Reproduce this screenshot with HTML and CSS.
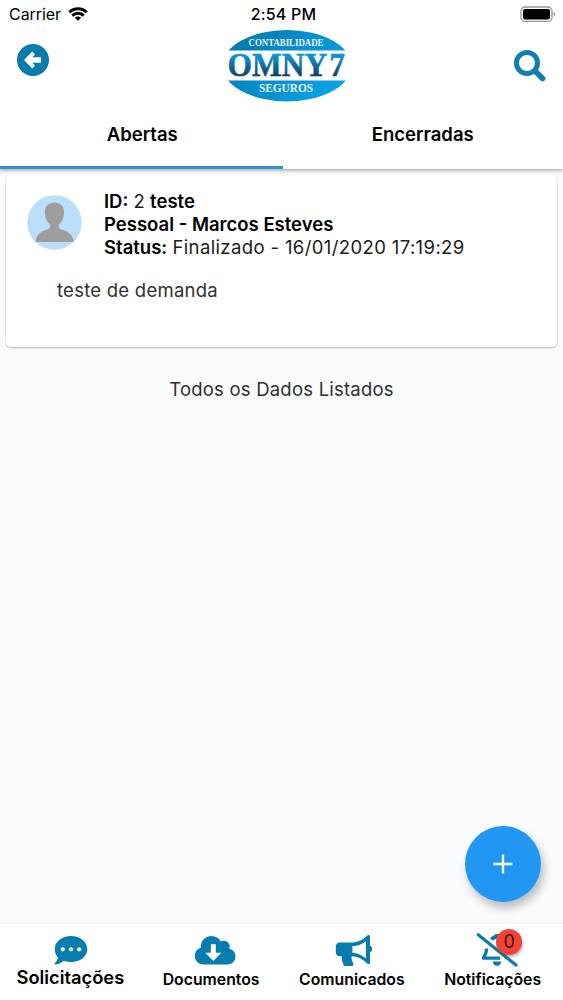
FILE: index.html
```html
<!DOCTYPE html>
<html lang="pt-BR">
<head>
<meta charset="utf-8">
<title>Solicitações</title>
<link rel="stylesheet" href="styles.css">
</head>
<body>
<div class="app">
  <header class="top">
    <div class="status-bar">
      <div class="carrier"><span>Carrier</span>
        <svg class="wifi" width="20" height="14" viewBox="0 0 20 14" fill="none" stroke="#000" stroke-width="2.9"><path d="M1.300 5.300a12.400 12.400 0 0 1 17.400 0"/><path d="M4.300 8.600a8.100 8.100 0 0 1 11.400 0"/><path d="M10 13.800 6.900 10.800a4.400 4.400 0 0 1 6.200 0z" fill="#000" stroke="none"/></svg>
      </div>
      <span class="clock">2:54 PM</span>
      <svg class="battery" width="36" height="17" viewBox="0 0 36 17"><rect x="1" y="1" width="31" height="14.4" rx="4" fill="#fff" stroke="#999" stroke-width="1.3"/><rect x="3" y="3" width="27" height="10.4" rx="2" fill="#000"/><path d="M33.6 5.800c2.200.8 2.200 4 0 4.800z" fill="#999"/></svg>
    </div>
    <div class="toolbar">
      <svg class="back" width="32" height="32" viewBox="0 0 32 32"><circle cx="16" cy="16" r="16" fill="#057cae"/><path d="M7 16 15.200 7.600 18 10.400 15.300 13.200H24v5.600h-8.700l2.700 2.800-2.800 2.800z" fill="#fff"/></svg>
      <svg class="logo" width="122" height="74" viewBox="0 0 122 74">
        <defs>
          <linearGradient id="oval" x1="0" x2="1" y1="0" y2=".5"><stop offset="0" stop-color="#076fa4"/><stop offset=".5" stop-color="#078bc9"/><stop offset="1" stop-color="#0aa1e5"/></linearGradient>
          <linearGradient id="word" x1="0" x2="0" y1="0" y2="1"><stop offset=".25" stop-color="#0d93d0"/><stop offset=".8" stop-color="#123f63"/></linearGradient>
          <clipPath id="caps"><path d="M0 0h122v21.500H0zM0 51.500h122V74H0z"/></clipPath>
        </defs>
        <ellipse cx="61" cy="36.800" rx="64.500" ry="35.700" fill="url(#oval)" clip-path="url(#caps)"/>
        <text class="logo-small" x="60" y="17" font-size="10" textLength="75" lengthAdjust="spacingAndGlyphs">CONTABILIDADE</text>
        <text class="logo-word" x="1.500" y="47.300" font-size="33" textLength="117.500" lengthAdjust="spacingAndGlyphs" fill="url(#word)" stroke="url(#word)" stroke-width=".5">OMNY<tspan dx="2">7</tspan></text>
        <text class="logo-small" x="60" y="63" font-size="11.500" textLength="54" lengthAdjust="spacingAndGlyphs">SEGUROS</text>
      </svg>
      <svg class="search" width="34" height="34" viewBox="0 0 34 34" fill="none" stroke="#107fad"><circle cx="14" cy="14" r="10.500" stroke-width="5"/><path d="m22 22 7.600 7.600" stroke-width="5.600" stroke-linecap="round"/></svg>
    </div>
    <nav class="tabs"><a class="tab active">Abertas</a><a class="tab">Encerradas</a></nav>
  </header>
  <main class="content">
    <article class="card">
      <div class="card-head">
        <svg class="avatar" width="55" height="55" viewBox="0 0 55 55"><circle cx="27.500" cy="27.500" r="27.200" fill="#bbdefb"/><path d="M8.500 47c.7-7 4.500-10 11-12.200 3-1 3.900-2 3.700-4.800-3-3-5.400-7.500-5.400-13C17.800 11 22 7.500 27.500 7.500S37 11 37 17c0 5.500-2.200 10-5.200 13-.1 2.800.7 3.800 3.700 4.800C42 37 46 40 46.600 47z" fill="#9e9e9e"/></svg>
        <div class="details">
          <div class="line"><b>ID:</b> 2 <b>teste</b></div>
          <div class="line"><b>Pessoal - Marcos Esteves</b></div>
          <div class="line"><b>Status:</b> <span class="status">Finalizado - 16/01/2020 17:19:29</span></div>
        </div>
      </div>
      <p class="message">teste de demanda</p>
    </article>
    <p class="end">Todos os Dados Listados</p>
    <button class="fab" aria-label="Adicionar"><svg width="20" height="20" viewBox="0 0 20 20"><path d="M10 .5v19M.5 10h19" stroke="#fff" stroke-width="2.400"/></svg></button>
  </main>
  <nav class="bottom">
    <a class="item current">
      <svg width="34" height="30" viewBox="0 0 34 30"><path d="M17 1c9 0 16.300 5.800 16.300 13.200S26 27 17 27c-2.600 0-5-.4-7.200-1.200C7 28 4 29.600.8 29.600c-.5 0-.6-.6-.3-.9 1.500-1.700 3-3.700 3.500-6.200C2 20.200.7 17.400.7 14.200.7 6.800 8 1 17 1z" fill="#067dae"/><g fill="#fff"><circle cx="8.800" cy="14.300" r="2.100"/><circle cx="17" cy="14.300" r="2.100"/><circle cx="25.200" cy="14.300" r="2.100"/></g></svg>
      <span>Solicitações</span>
    </a>
    <a class="item docs">
      <svg width="42" height="30" viewBox="0 0 42 30"><path d="M9.500 29.400C4.500 29.400.8 25.700.8 20.900c0-3.900 2.400-7 6-8.100C6.500 6 11.300 1 17.500 1c4.200 0 7.600 2.100 9.400 5.400 4.200-2.200 9 .7 8.800 5.400 0 .8-.1 1.300-.3 1.900 3.500.8 6.100 3.900 6.100 7.700 0 4.500-3.500 8-8 8z" fill="#067dae"/><path d="M16.800 9.200h5v8.600h5.500l-8 8.300-8-8.300h5.500z" fill="#fff"/></svg>
      <span>Documentos</span>
    </a>
    <a class="item news">
      <svg width="38" height="34" viewBox="0 0 38 34"><path d="M5 9.500h10.500c7 0 12.500-2.600 16.800-7.100.9-.9 2.700-.5 2.700 1.200v9.200c1.400.7 2.200 1.900 2.200 3.300s-.8 2.600-2.200 3.300v10c0 1.700-1.800 2.200-2.800 1.200-4.300-4.600-9.500-7-15.500-7.300-.7 3.400.8 5.500 1.700 7.200.7 1.300-.4 2.600-1.700 2.600h-6c-.9 0-1.600-.4-2-1.200-1.400-2.800-2.200-5.600-1.900-8.700H5c-2.400 0-4.200-1.600-4.200-4v-5.700c0-2.400 1.800-4 4.200-4z" fill="#067dae"/><path d="M17.400 13.300c5.300-.2 10-2.200 13.500-5v17.100c-3.600-3-8.200-5.200-13.500-5.600z" fill="#fff"/></svg>
      <span>Comunicados</span>
    </a>
    <a class="item alerts">
      <div class="bell">
        <svg width="42" height="34" viewBox="0 0 42 34"><g fill="none" stroke="#067dae" stroke-linejoin="round" stroke-width="3.200"><path d="M15.500 6.500c1.500-1.900 3.200-2.700 5.500-3V1" stroke-width="4"/><path d="M10.600 15.500c-.2 4.500-1.200 7-3.300 9.600H24"/><path d="m2.200 1.800 37.800 30.300" stroke-linecap="round"/></g><path d="M16.800 28.600h8.400a4.200 4.200 0 0 1-8.400 0z" fill="#067dae"/></svg>
        <span class="badge">0</span>
      </div>
      <span>Notificações</span>
    </a>
  </nav>
</div>
</body>
</html>
```
FILE: styles.css
```css
* { box-sizing: border-box; }
body { margin: 0; background: #fafbfd; color: #000; font-family: Inter, "Liberation Sans", sans-serif; }
svg { display: block; flex: none; }
p { margin: 0; }
.app { height: 1000px; display: flex; flex-direction: column; overflow: hidden; }
.top { height: 169px; flex: none; display: flex; flex-direction: column; background: #fff; box-shadow: 0 1px 4px rgba(0,0,0,.4); z-index: 1; }
.status-bar { height: 28px; flex: none; display: grid; grid-template-columns: 1fr auto 1fr; align-items: center; padding: 0 7px 0 9px; }
.carrier { display: flex; align-items: center; gap: 7px; font-size: 16px; line-height: 20px; letter-spacing: -.05px; }
.wifi { margin-bottom: 1px; }
.clock { font-size: 16px; font-weight: 500; line-height: 20px; letter-spacing: .2px; margin-left: 2px; }
.battery { justify-self: end; }
.toolbar { height: 82px; flex: none; display: grid; grid-template-columns: 1fr 122px 1fr; align-items: start; padding: 0 16px 0 17px; }
.back { margin-top: 16px; }
.logo { margin: 1px 0 0 5px; }
.search { margin-top: 21px; justify-self: end; }
.logo-small { font-family: "Liberation Serif", serif; font-weight: 700; fill: #e9f5fc; text-anchor: middle; }
.logo-word { font-family: "Liberation Serif", serif; font-weight: 700; }
.tabs { flex: 1; display: flex; }
.tab { flex: 1; text-align: center; font-size: 18.500px; line-height: 24px; font-weight: 600; padding-top: 12px; }
.tab.active { border-bottom: 3px solid #3491d3; padding-left: 2px; }
.content { flex: 1; display: flex; flex-direction: column; padding: 6px 6px 0; }
.card { height: 172px; flex: none; background: #fff; border-radius: 5px; box-shadow: 0 1px 2px rgba(0,0,0,.28); padding: 15px 21px; }
.card-head { display: flex; gap: 22px; }
.avatar { margin-top: 5px; }
.line { font-size: 18.500px; line-height: 23px; white-space: nowrap; color: #1b1b1b; }
.line b { font-weight: 600; color: #000; }
.status { letter-spacing: .38px; }
.message { margin: 18px 0 0 30px; font-size: 18.500px; line-height: 26px; letter-spacing: .25px; color: #303030; }
.end { margin-top: 29px; text-align: center; font-size: 18.500px; line-height: 26px; letter-spacing: .22px; color: #303030; }
.fab { width: 76px; height: 76px; margin: auto 16px 20px auto; border: 0; padding: 0; border-radius: 50%; background: #2196f3; box-shadow: 3px 6px 10px rgba(0,0,0,.26); display: grid; place-items: center; }
.bottom { height: 78px; flex: none; display: grid; grid-template-columns: repeat(4, 1fr); background: #fff; border-top: 2px solid #f4f5f8; box-shadow: 0 -2px 2px rgba(0,0,0,.015); }
.item { height: 76px; display: flex; flex-direction: column; align-items: center; font-size: 15.800px; font-weight: 600; white-space: nowrap; }
.item > span { line-height: 22px; }
.current { padding-top: 11px; font-size: 18.300px; }
.current svg { margin-left: 1px; }
.docs { padding-top: 11px; }
.docs svg { margin-left: 8px; }
.docs > span { margin-top: 4px; }
.current > span { margin-top: 1px; }
.news, .alerts { padding-top: 9px; }
.news svg { margin-left: 4px; }
.news > span, .alerts > span { margin-top: 2px; }
.bell { position: relative; margin-left: 9px; }
.badge { position: absolute; left: 20px; top: -4px; width: 26px; height: 26px; border-radius: 50%; background: #f44336; box-shadow: 1px 2px 3px rgba(0,0,0,.3); color: #351210; font-size: 18px; font-weight: 400; line-height: 26px; text-align: center; }
```
